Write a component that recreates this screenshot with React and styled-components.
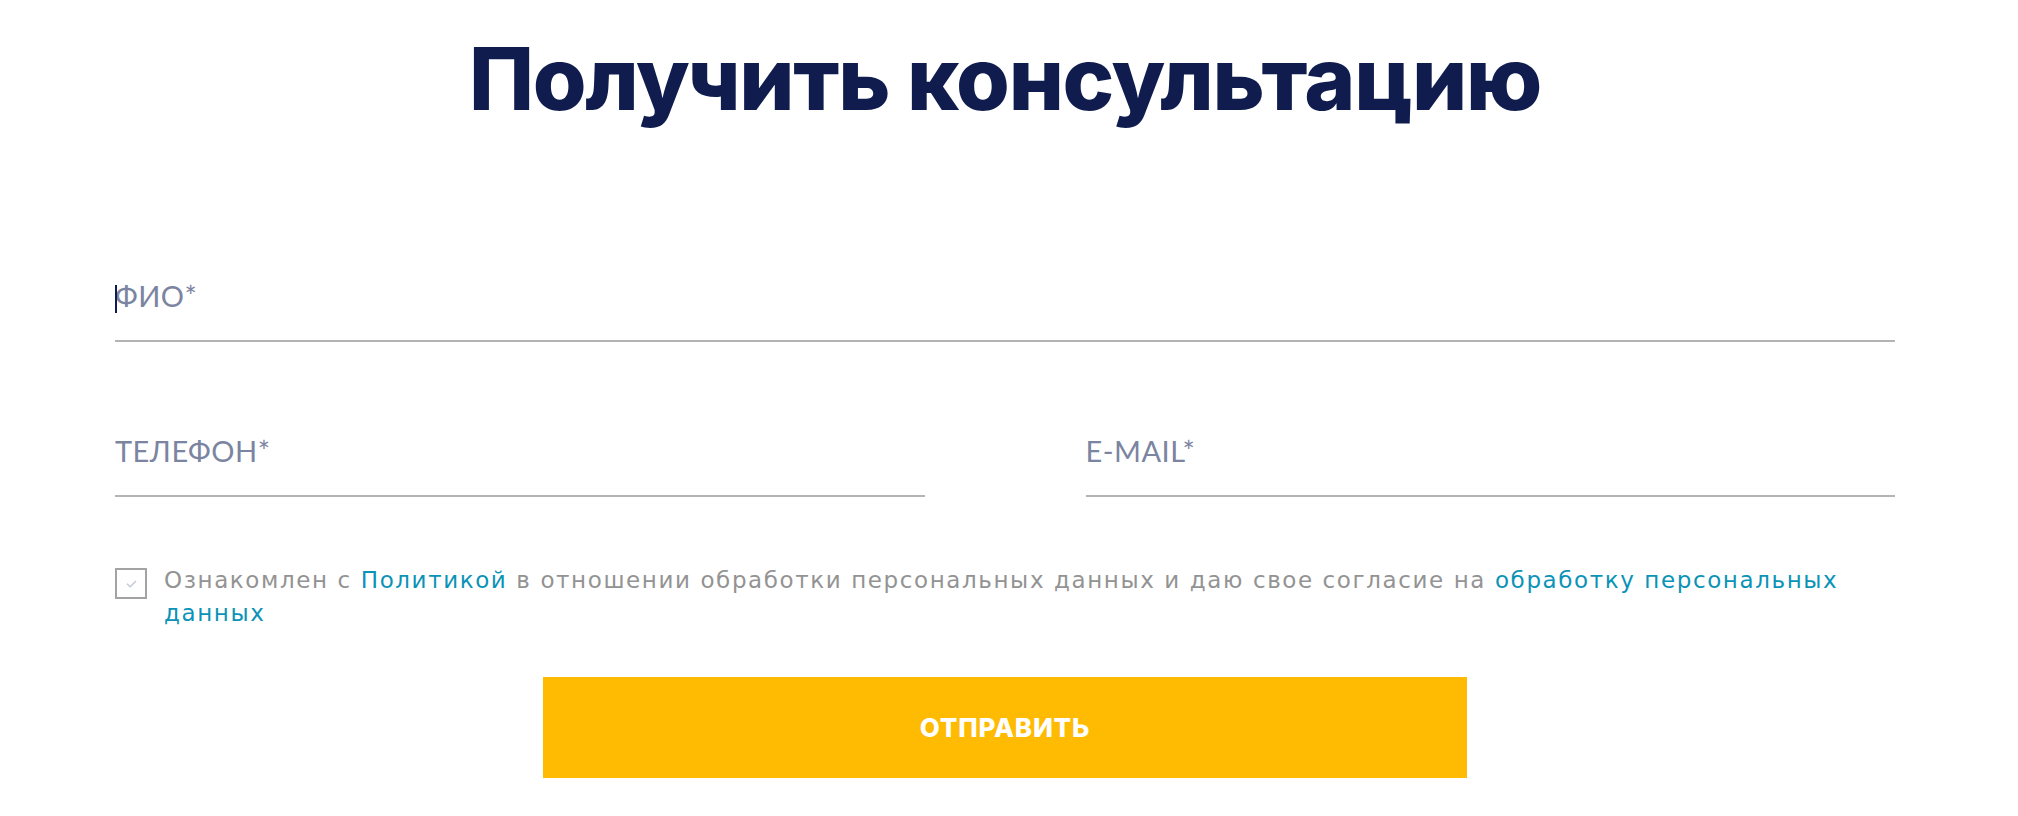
import React from "react";
import styled, { createGlobalStyle } from "styled-components";

const GlobalStyle = createGlobalStyle`
  html, body {
    margin: 0;
    padding: 0;
    background: #ffffff;
  }
  * { box-sizing: border-box; }
`;

const Page = styled.div`
  width: 1780px;
  margin-left: 115px;
  padding-top: 34px;
`;

const Title = styled.h1`
  margin: 0;
  font-family: Inter, "Noto Sans", sans-serif;
  font-weight: 800;
  font-size: 87px;
  line-height: 90px;
  letter-spacing: -1.3px;
  color: #0f1c4d;
  text-align: center;
`;

const Form = styled.form`
  margin-top: 152px;
  display: flex;
  flex-direction: column;
`;

const FieldRow = styled.div`
  display: grid;
  grid-template-columns: ${(p) => (p.$split ? "1fr 1fr" : "1fr")};
  column-gap: 161px;
  margin-top: ${(p) => p.$gap || 0}px;
`;

const Field = styled.div`
  position: relative;
`;

const Caret = styled.span`
  position: absolute;
  left: 0;
  top: 9px;
  width: 2px;
  height: 28px;
  background: #0f1c4d;
`;

const Input = styled.input`
  display: block;
  width: 100%;
  box-sizing: content-box;
  height: 40px;
  line-height: 40px;
  padding: 0 0 24px 0;
  margin: 0;
  border: none;
  border-bottom: 2px solid #b4b4b4;
  border-radius: 0;
  outline: none;
  background: transparent;
  font-family: Lato, "Open Sans", sans-serif;
  font-size: 29px;
  letter-spacing: 0.5px;
  color: #0f1c4d;
  &::placeholder {
    color: #7b84a1;
    opacity: 1;
  }
`;

const Agreement = styled.label`
  display: flex;
  align-items: flex-start;
  gap: 17px;
  margin-top: 67px;
  cursor: pointer;
`;

const Box = styled.span`
  flex: none;
  width: 32px;
  height: 31px;
  margin-top: 4px;
  border: 2px solid #a3a3a3;
  display: flex;
  align-items: center;
  justify-content: center;
`;

const AgreementText = styled.span`
  font-family: "DejaVu Sans", Verdana, sans-serif;
  font-size: 23px;
  line-height: 33px;
  letter-spacing: 1.6px;
  color: #939393;
`;

const Link = styled.a`
  color: #0b93b7;
  text-decoration: none;
`;

const Submit = styled.button`
  display: block;
  align-self: center;
  width: 924px;
  height: 101px;
  margin-top: 47px;
  border: none;
  border-radius: 0;
  background: #ffba02;
  color: #ffffff;
  font-family: Inter, "Noto Sans", sans-serif;
  font-weight: 800;
  font-size: 26px;
  letter-spacing: 0.8px;
  text-transform: uppercase;
  cursor: pointer;
`;

export default function App() {
  return (
    <>
      <GlobalStyle />
      <Page>
        <Title>Получить консультацию</Title>
        <Form onSubmit={(e) => e.preventDefault()}>
          <FieldRow>
            <Field>
              <Caret />
              <Input type="text" placeholder="ФИО*" />
            </Field>
          </FieldRow>
          <FieldRow $split $gap={89}>
            <Field>
              <Input type="tel" placeholder="ТЕЛЕФОН*" />
            </Field>
            <Field>
              <Input type="email" placeholder="E-MAIL*" />
            </Field>
          </FieldRow>
          <Agreement>
            <Box>
              <svg width="11" height="8" viewBox="0 0 11 8" fill="none">
                <path d="M1 3.8L4.2 6.8L10 1" stroke="#c3c8d6" strokeWidth="1.4" />
              </svg>
            </Box>
            <AgreementText>
              Ознакомлен с <Link href="#">Политикой</Link> в отношении обработки
              персональных данных и даю свое согласие на{" "}
              <Link href="#">обработку персональных данных</Link>
            </AgreementText>
          </Agreement>
          <Submit type="submit">Отправить</Submit>
        </Form>
      </Page>
    </>
  );
}
